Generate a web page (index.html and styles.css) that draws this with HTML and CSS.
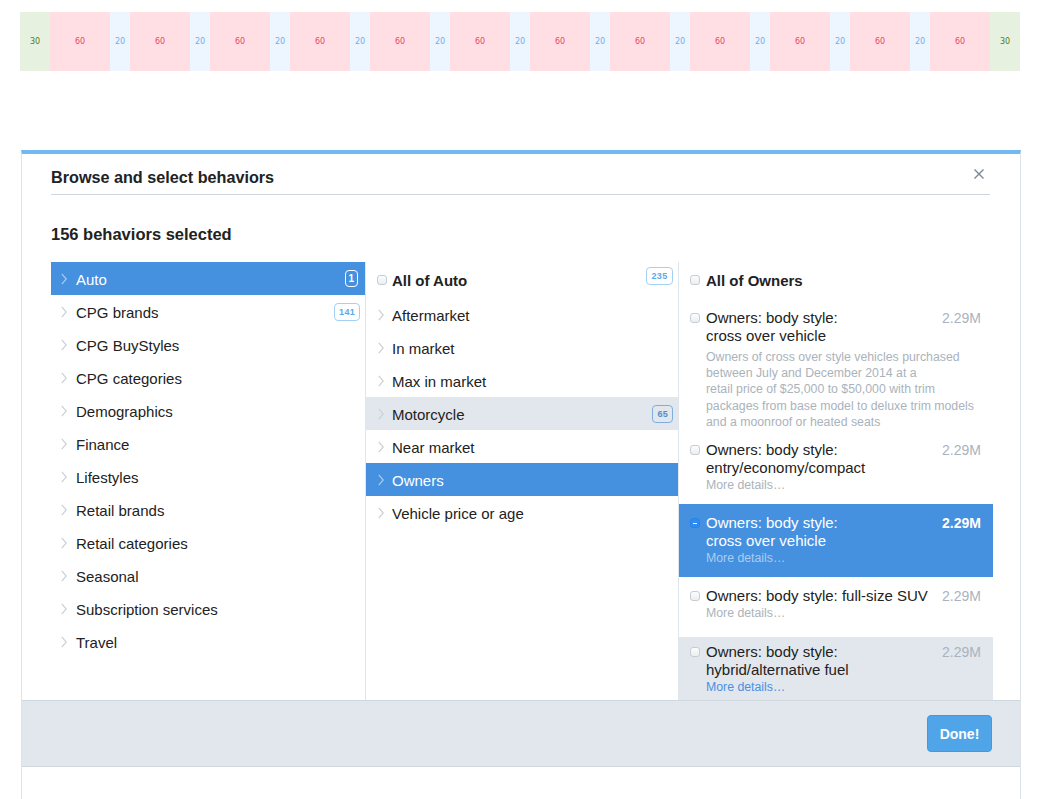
FILE: index.html
```html
<!DOCTYPE html>
<html lang="en">
<head>
<meta charset="utf-8">
<title>Browse and select behaviors</title>
<link rel="stylesheet" href="styles.css">
</head>
<body>
<div class="ruler">
  <div class="c c30">30</div>
  <div class="c c60">60</div><div class="c c20">20</div>
  <div class="c c60">60</div><div class="c c20">20</div>
  <div class="c c60">60</div><div class="c c20">20</div>
  <div class="c c60">60</div><div class="c c20">20</div>
  <div class="c c60">60</div><div class="c c20">20</div>
  <div class="c c60">60</div><div class="c c20">20</div>
  <div class="c c60">60</div><div class="c c20">20</div>
  <div class="c c60">60</div><div class="c c20">20</div>
  <div class="c c60">60</div><div class="c c20">20</div>
  <div class="c c60">60</div><div class="c c20">20</div>
  <div class="c c60">60</div><div class="c c20">20</div>
  <div class="c c60">60</div>
  <div class="c c30">30</div>
</div>

<div class="modal">
  <div class="modal-body">
    <div class="modal-head">
      <h2 class="modal-title">Browse and select behaviors</h2>
      <span class="close"><svg width="10" height="10" viewBox="0 0 10 10"><path d="M0.5 0.5 L9.5 9.5 M9.5 0.5 L0.5 9.5" stroke="#7b8792" stroke-width="1.4" fill="none"/></svg></span>
    </div>
    <h3 class="count">156 behaviors selected</h3>

    <div class="cols">
      <ul class="col col-cat">
        <li class="row cat selected"><span class="chev"><svg width="6" height="12" viewBox="0 0 6 12"><polyline points="0.8,0.8 5.2,6 0.8,11.2"/></svg></span><span class="name">Auto</span><span class="badge badge-white">1</span></li>
        <li class="row cat"><span class="chev"><svg width="6" height="12" viewBox="0 0 6 12"><polyline points="0.8,0.8 5.2,6 0.8,11.2"/></svg></span><span class="name">CPG brands</span><span class="badge">141</span></li>
        <li class="row cat"><span class="chev"><svg width="6" height="12" viewBox="0 0 6 12"><polyline points="0.8,0.8 5.2,6 0.8,11.2"/></svg></span><span class="name">CPG BuyStyles</span></li>
        <li class="row cat"><span class="chev"><svg width="6" height="12" viewBox="0 0 6 12"><polyline points="0.8,0.8 5.2,6 0.8,11.2"/></svg></span><span class="name">CPG categories</span></li>
        <li class="row cat"><span class="chev"><svg width="6" height="12" viewBox="0 0 6 12"><polyline points="0.8,0.8 5.2,6 0.8,11.2"/></svg></span><span class="name">Demographics</span></li>
        <li class="row cat"><span class="chev"><svg width="6" height="12" viewBox="0 0 6 12"><polyline points="0.8,0.8 5.2,6 0.8,11.2"/></svg></span><span class="name">Finance</span></li>
        <li class="row cat"><span class="chev"><svg width="6" height="12" viewBox="0 0 6 12"><polyline points="0.8,0.8 5.2,6 0.8,11.2"/></svg></span><span class="name">Lifestyles</span></li>
        <li class="row cat"><span class="chev"><svg width="6" height="12" viewBox="0 0 6 12"><polyline points="0.8,0.8 5.2,6 0.8,11.2"/></svg></span><span class="name">Retail brands</span></li>
        <li class="row cat"><span class="chev"><svg width="6" height="12" viewBox="0 0 6 12"><polyline points="0.8,0.8 5.2,6 0.8,11.2"/></svg></span><span class="name">Retail categories</span></li>
        <li class="row cat"><span class="chev"><svg width="6" height="12" viewBox="0 0 6 12"><polyline points="0.8,0.8 5.2,6 0.8,11.2"/></svg></span><span class="name">Seasonal</span></li>
        <li class="row cat"><span class="chev"><svg width="6" height="12" viewBox="0 0 6 12"><polyline points="0.8,0.8 5.2,6 0.8,11.2"/></svg></span><span class="name">Subscription services</span></li>
        <li class="row cat"><span class="chev"><svg width="6" height="12" viewBox="0 0 6 12"><polyline points="0.8,0.8 5.2,6 0.8,11.2"/></svg></span><span class="name">Travel</span></li>
      </ul>

      <div class="col col-sub">
        <div class="all-row"><span class="cb"></span><span class="name">All of Auto</span><span class="badge badge-top">235</span></div>
        <div class="row sub"><span class="chev"><svg width="6" height="12" viewBox="0 0 6 12"><polyline points="0.8,0.8 5.2,6 0.8,11.2"/></svg></span><span class="name">Aftermarket</span></div>
        <div class="row sub"><span class="chev"><svg width="6" height="12" viewBox="0 0 6 12"><polyline points="0.8,0.8 5.2,6 0.8,11.2"/></svg></span><span class="name">In market</span></div>
        <div class="row sub"><span class="chev"><svg width="6" height="12" viewBox="0 0 6 12"><polyline points="0.8,0.8 5.2,6 0.8,11.2"/></svg></span><span class="name">Max in market</span></div>
        <div class="row sub hover"><span class="chev"><svg width="6" height="12" viewBox="0 0 6 12"><polyline points="0.8,0.8 5.2,6 0.8,11.2"/></svg></span><span class="name">Motorcycle</span><span class="badge badge-dark">65</span></div>
        <div class="row sub"><span class="chev"><svg width="6" height="12" viewBox="0 0 6 12"><polyline points="0.8,0.8 5.2,6 0.8,11.2"/></svg></span><span class="name">Near market</span></div>
        <div class="row sub selected"><span class="chev"><svg width="6" height="12" viewBox="0 0 6 12"><polyline points="0.8,0.8 5.2,6 0.8,11.2"/></svg></span><span class="name">Owners</span></div>
        <div class="row sub"><span class="chev"><svg width="6" height="12" viewBox="0 0 6 12"><polyline points="0.8,0.8 5.2,6 0.8,11.2"/></svg></span><span class="name">Vehicle price or age</span></div>
      </div>

      <div class="col col-items">
        <div class="all-row all-owners"><span class="cb"></span><span class="name">All of Owners</span></div>

        <div class="item item-open">
          <span class="cb"></span>
          <div class="title">Owners: body style:<br>cross over vehicle</div>
          <span class="size">2.29M</span>
          <div class="desc">Owners of cross over style vehicles purchased<br>between July and December 2014 at a<br>retail price of $25,000 to $50,000 with trim<br>packages from base model to deluxe trim models<br>and a moonroof or heated seats</div>
        </div>

        <div class="item">
          <span class="cb"></span>
          <div class="title">Owners: body style:<br>entry/economy/compact</div>
          <span class="size">2.29M</span>
          <div class="more">More details…</div>
        </div>

        <div class="item selected">
          <span class="cb cb-minus"></span>
          <div class="title">Owners: body style:<br>cross over vehicle</div>
          <span class="size">2.29M</span>
          <div class="more">More details…</div>
        </div>

        <div class="item">
          <span class="cb"></span>
          <div class="title">Owners: body style: full-size SUV</div>
          <span class="size">2.29M</span>
          <div class="more">More details…</div>
        </div>

        <div class="item hover">
          <span class="cb"></span>
          <div class="title">Owners: body style:<br>hybrid/alternative fuel</div>
          <span class="size">2.29M</span>
          <div class="more">More details…</div>
        </div>
      </div>
    </div>
  </div>
  <div class="modal-foot">
    <button class="done" type="button">Done!</button>
  </div>
  <div class="modal-rest"></div>
</div>
</body>
</html>
```

FILE: styles.css
```css
* { box-sizing: border-box; }

body {
  margin: 0;
  background: #fff;
  color: #222;
  font-family: "Liberation Sans", Arial, Helvetica, sans-serif;
}

/* ruler */
.ruler {
  display: flex;
  width: 1000px;
  height: 59px;
  margin: 12px 0 0 20px;
  font-family: "DejaVu Sans", sans-serif;
  font-size: 8px;
}
.c { display: flex; align-items: center; justify-content: center; }
.c30 { width: 30px; background: #e6f1df; color: #4f7f26; }
.c60 { width: 60px; background: #ffdfe3; color: #e8455c; }
.c20 { width: 20px; background: #edf5fe; color: #6fb0ee; }

/* modal */
.modal {
  width: 1000px;
  margin: 79px 0 0 21px;
  border: 1px solid #dde3e9;
  border-top: 4px solid #74b8f2;
  border-bottom: none;
}
.modal-body { padding: 0 27px 0 29px; }

.modal-head {
  display: flex;
  justify-content: space-between;
  align-items: flex-start;
  height: 41px;
  padding-top: 13px;
  margin-right: 3px;
  border-bottom: 1px solid #cdd6dd;
}
.modal-title {
  margin: 0;
  font-size: 16.2px;
  line-height: 20px;
  font-weight: bold;
  color: #222;
}
.close { display: block; margin: 2px 6px 0 0; line-height: 0; }

.count {
  margin: 28px 0 17px;
  font-size: 16.5px;
  line-height: 22px;
  font-weight: bold;
  color: #222;
}

/* columns */
.cols { display: flex; height: 438px; }
.col { margin: 0; padding: 0; list-style: none; overflow: hidden; }
.col-cat { width: 314px; }
.col-sub { width: 313px; border-left: 1px solid #dfe5ea; }
.col-items { flex: 1; border-left: 1px solid #dfe5ea; }

.row {
  display: flex;
  align-items: center;
  height: 33px;
  padding-top: 1px;
  font-size: 15px;
  color: #222;
}
.row .name { flex: 1; white-space: nowrap; }
.chev { display: block; width: 6px; height: 12px; line-height: 0; }
.chev polyline { fill: none; stroke: #c9d1d8; stroke-width: 1.2; }

.cat { padding-right: 5px; padding-left: 10px; }
.cat .chev { margin-right: 9px; }
.sub { padding-right: 5px; padding-left: 12px; }
.sub .chev { margin-right: 8px; }

.row.selected { background: #4590df; color: #fff; }
.row.selected .chev polyline { stroke: #a9cbef; }
.row.hover { background: #e1e7ed; }

/* badges */
.badge {
  display: flex;
  align-items: center;
  justify-content: center;
  height: 18px;
  padding: 0 4px;
  border: 1px solid #a3d1f6;
  border-radius: 4px;
  background: #fff;
  color: #5aa9ea;
  font-size: 9px;
  font-weight: bold;
  letter-spacing: 0.3px;
}
.badge-white {
  height: 17px;
  width: 13px;
  padding: 0;
  margin-right: 2px;
  margin-top: -2px;
  background: transparent;
  border: 1.5px solid #fff;
  color: #fff;
  font-size: 10px;
}
.badge-dark { background: transparent; border-color: #7eaee0; color: #4f8fd0; }
.badge-top { align-self: flex-start; margin-top: 5px; width: 27px; }

/* checkbox */
.cb {
  flex: none;
  display: block;
  width: 10px;
  height: 10px;
  border: 1px solid #c6cdd4;
  border-radius: 3px;
  background: linear-gradient(#fbfcfc, #eceef0);
}
.cb-minus {
  position: relative;
  background: #2f8bef;
  border-color: #2a84e6;
}
.cb-minus::after {
  content: "";
  position: absolute;
  left: 2px;
  top: 3.5px;
  width: 4px;
  height: 1.5px;
  background: #fff;
}

.all-row {
  display: flex;
  align-items: center;
  height: 36px;
  padding: 0 5px 0 11px;
  font-size: 15px;
  font-weight: bold;
  color: #222;
}
.all-row .cb { margin-right: 5px; }
.all-row .name { flex: 1; }
.all-owners .cb { margin-right: 6px; }

/* items */
.item {
  display: grid;
  grid-template-columns: 10px 1fr auto;
  column-gap: 6px;
  align-items: start;
  padding: 10px 12px 11px 11px;
}
.item .cb { grid-column: 1; grid-row: 1; margin-top: 4px; }
.item .title { grid-column: 2; grid-row: 1; font-size: 15px; line-height: 18px; color: #222; }
.item .size {
  grid-column: 3;
  grid-row: 1;
  font-size: 14px;
  line-height: 18px;
  color: #a9b3bd;
  white-space: nowrap;
}
.item .desc {
  grid-column: 2 / 4;
  margin-top: 4px;
  font-size: 12.3px;
  line-height: 16.2px;
  color: #aab3bc;
  white-space: nowrap;
}
.item .more { grid-column: 2 / 4; font-size: 12.3px; line-height: 16px; color: #aab3bc; }
.item-open { padding-top: 11px; padding-bottom: 1px; }

.item.selected { background: #4590df; }
.item.selected .title { color: #fff; }
.item.selected .size { color: #fff; font-weight: bold; }
.item.selected .more { color: #a9cdf2; }

.item.hover { background: #e1e7ed; padding-top: 6px; margin-top: 5px; }
.item.hover .more { color: #4a90e2; }

/* footer */
.modal-foot {
  display: flex;
  justify-content: flex-end;
  height: 67px;
  padding: 14px 28px 0 0;
  background: #e1e7ed;
  border-top: 1px solid #cfd8df;
  border-bottom: 1px solid #cfd8df;
}
.done {
  width: 65px;
  height: 37px;
  padding: 0;
  border: 1px solid #4598dc;
  border-radius: 4px;
  background: #50a4e8;
  color: #fff;
  font-family: "Liberation Sans", Arial, sans-serif;
  font-size: 14px;
  font-weight: bold;
}
.modal-rest { height: 40px; }
```
